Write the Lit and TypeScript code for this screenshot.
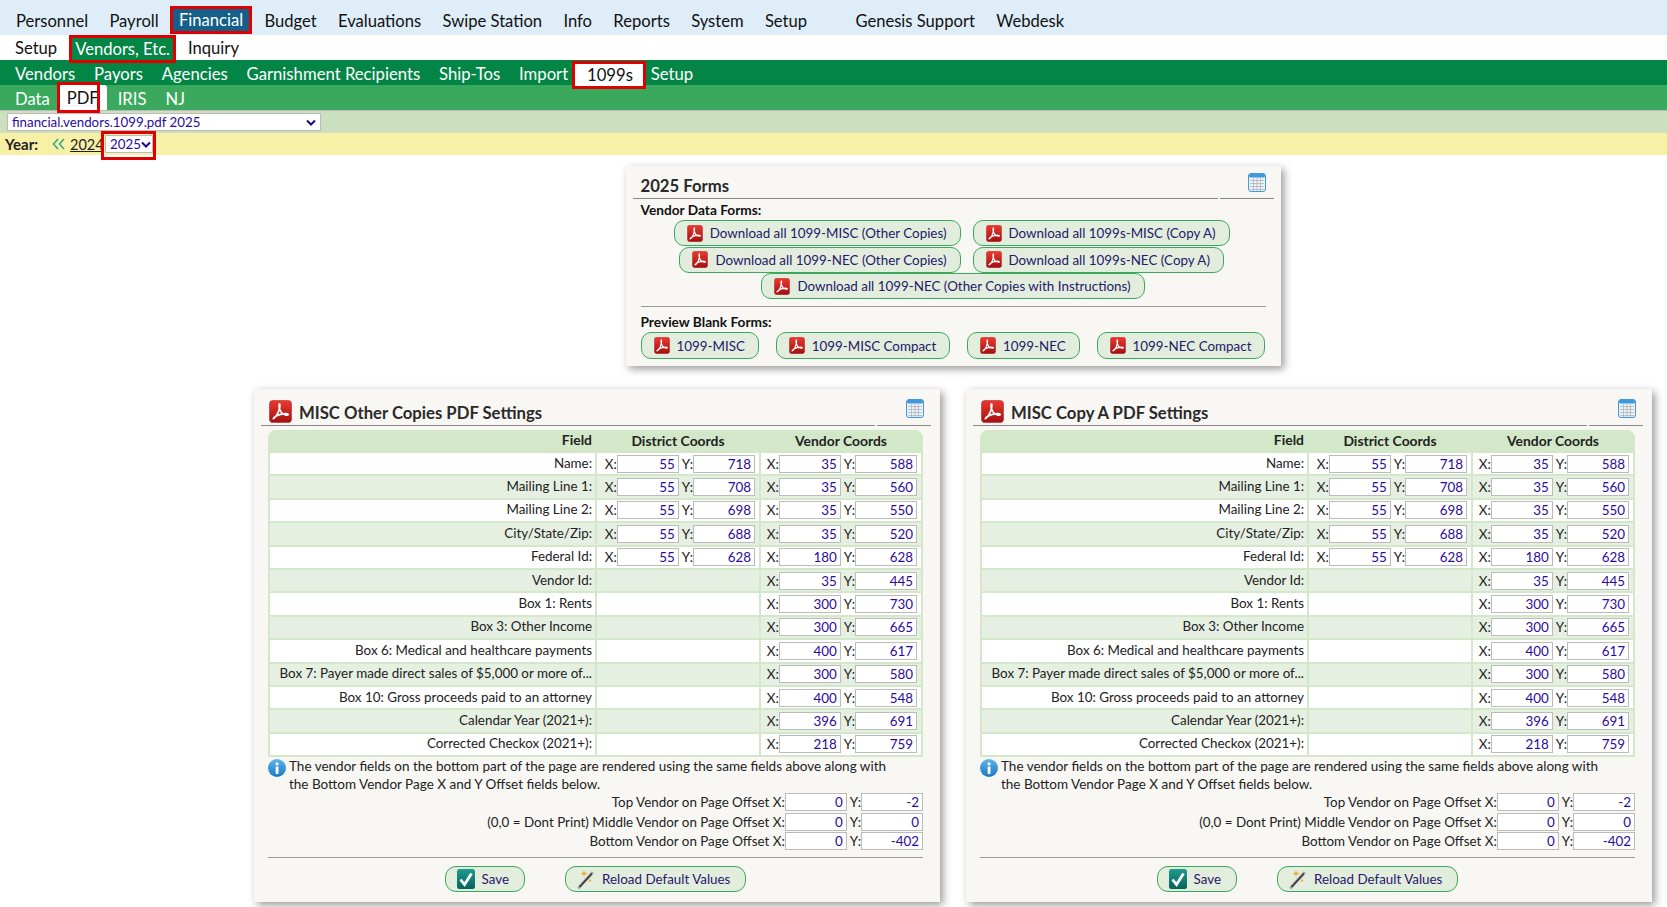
import { LitElement, html, css } from "lit";
import { customElement } from "lit/decorators.js";

const pdf = (w: number, h: number) => html`<svg class="ic" width=${w} height=${h} viewBox="0 0 24 24" preserveAspectRatio="none"><defs><linearGradient id="pg" x1="0" y1="0" x2="0" y2="1"><stop offset="0" stop-color="#ea3a30"/><stop offset="1" stop-color="#a30f10"/></linearGradient></defs><rect x="0.5" y="0.5" width="23" height="23" rx="3.500" fill="url(#pg)" stroke="#b32a2a" stroke-width=".6"/><path d="M4.500 19.500C7 18.500 10 13 11 8.500 11.500 6 11.400 4 11 4 10.400 4 10.200 6.500 11 9 12 12.500 14.500 15 17 15.500 19 15.900 20.500 15.500 20 15 19.300 14 15 14.300 12 15 9 15.800 5.800 17 4.500 19.500Z" fill="none" stroke="#fff" stroke-width="1.800" stroke-linejoin="round"/></svg>`;
const cal = html`<svg class="ic" width="18" height="19" viewBox="0 0 18 19"><rect x=".5" y=".5" width="17" height="18" rx="2.500" fill="#eef3f7" stroke="#3f97dc"/><rect x="1" y="1" width="16" height="3.500" rx="1.500" fill="#3f97dc"/><path d="M2 7.500h14M2 10.500h14M2 13.500h14M2 16.500h14M5.500 5v13M9 5v13M12.500 5v13" stroke="#a9b4bc" stroke-width=".8"/></svg>`;
const chev = html`<svg class="ic" width="10" height="7" viewBox="0 0 10 7"><path d="M1 1.500l4 4 4-4" fill="none" stroke="#1b0a80" stroke-width="2"/></svg>`;
const dbl = html`<svg class="ic" width="13" height="12" viewBox="0 0 13 12"><path d="M6 1L1.500 6 6 11M12 1L7.500 6 12 11" fill="none" stroke="#2ba98c" stroke-width="1.500"/></svg>`;
const info = html`<svg class="ic" width="18" height="18" viewBox="0 0 18 18"><defs><linearGradient id="ig" x1="0" y1="0" x2="0" y2="1"><stop offset="0" stop-color="#5db4ea"/><stop offset="1" stop-color="#1c78c4"/></linearGradient></defs><circle cx="9" cy="9" r="9" fill="url(#ig)"/><rect x="7.700" y="7.500" width="2.800" height="7.500" fill="#fff"/><circle cx="9" cy="4.800" r="1.600" fill="#fff"/></svg>`;
const check = html`<svg class="ic" width="18" height="20" viewBox="0 0 18 20"><defs><linearGradient id="cg" x1="0" y1="0" x2="0" y2="1"><stop offset="0" stop-color="#1f9c90"/><stop offset="1" stop-color="#07635a"/></linearGradient></defs><rect width="18" height="20" rx="2.500" fill="url(#cg)"/><path d="M3.500 10.500l4 5 7-11" fill="none" stroke="#fff" stroke-width="2.800"/></svg>`;
const wand = html`<svg class="ic" width="18" height="20" viewBox="0 0 18 20"><path d="M2 18.500L15 4" stroke="#aaa" stroke-width="3" stroke-linecap="round"/><path d="M2.500 18L15 4.500" stroke="#333" stroke-width="1.600"/><path d="M7 1l1 2.500L10.500 4.500 8 5.500 7 8 6 5.500 3.500 4.500 6 3.500zM13 9.500l.6 1.400 1.400.6-1.400.6-.6 1.400-.6-1.400-1.400-.6 1.400-.6z" fill="#f2a93b"/></svg>`;

const rows: [string, number[] | null, number[]][] = [
  ["Name:", [55, 718], [35, 588]],
  ["Mailing Line 1:", [55, 708], [35, 560]],
  ["Mailing Line 2:", [55, 698], [35, 550]],
  ["City/State/Zip:", [55, 688], [35, 520]],
  ["Federal Id:", [55, 628], [180, 628]],
  ["Vendor Id:", null, [35, 445]],
  ["Box 1: Rents", null, [300, 730]],
  ["Box 3: Other Income", null, [300, 665]],
  ["Box 6: Medical and healthcare payments", null, [400, 617]],
  ["Box 7: Payer made direct sales of $5,000 or more of...", null, [300, 580]],
  ["Box 10: Gross proceeds paid to an attorney", null, [400, 548]],
  ["Calendar Year (2021+):", null, [396, 691]],
  ["Corrected Checkox (2021+):", null, [218, 759]],
];
const offs: [string, number, number][] = [
  ["Top Vendor on Page Offset X:", 0, -2],
  ["(0,0 = Dont Print) Middle Vendor on Page Offset X:", 0, 0],
  ["Bottom Vendor on Page Offset X:", 0, -402],
];

@customElement("app-root")
export class AppRoot extends LitElement {
  static styles = css`
    :host { display: block; font-family: "Lato", sans-serif; font-size: 13.400px; color: #222; height: 907px; overflow: hidden; }
    svg.ic { flex: none; display: block; }
    .nav { display: flex; align-items: center; box-sizing: border-box; font-size: 16.600px; }
    .nav a { display: block; white-space: nowrap; }
    .n1 { height: 35px; background: #deedf7; padding: 6px 0 0 16px; gap: 21.300px; color: #111; }
    .n2 { height: 25px; background: #fff; padding: 1px 0 0 15px; color: #111; }
    .n3 { height: 25px; background: #038546; padding: 2px 0 0 15px; gap: 18.800px; color: #fff; font-size: 16.700px; }
    .n4 { height: 25px; background: #3aa95e; padding: 2px 0 0 15px; color: #fff; }
    .mark { position: relative; }
    .mark::after { content: ""; position: absolute; border: 3px solid #e00000; z-index: 2; pointer-events: none; }
    .n1 .far { margin-left: 27px; }
    .fin { background: #156088; color: #fff; padding: 2px 6px; margin: -1px -6px 0 -7px; line-height: 18px; }
    .fin::after { inset: -3px; }
    .n2 .ven { align-self: flex-start; background: #038546; color: #fff; margin: 2px 15px 0 15px; padding: 0 3px; height: 22px; line-height: 22px; }
    .ven::after { inset: -3px; }
    .n3 .k99 { align-self: flex-start; background: #fff; color: #111; padding: 0 10px 0 12px; margin: 2px -11px 0 -12px; height: 22px; line-height: 22px; }
    .k99::after { inset: -3px; }
    .n4 .pd { align-self: flex-start; background: #fff; color: #111; height: 25px; margin: -2px 11px 0 9px; padding: 0 8px; border-radius: 3px 3px 0 0; line-height: 26px; }
    .pd::after { left: -2px; top: -3px; bottom: -3px; width: 37px; }
    .n4 .s { margin-right: 19px; }
    .n5 { height: 23px; background: #cce0bf; border-top: 1px solid #b9b9b9; box-sizing: border-box; display: flex; align-items: center; padding-left: 7px; }
    .sel { box-sizing: border-box; background: #fff; border: 1px solid #bbb; height: 18px; color: #2a0a9e; font-size: 13.300px; display: flex; align-items: center; justify-content: space-between; padding: 0 4px; flex: none; }
    .sel1 { width: 314px; }
    .sel2 { width: 48px; margin-left: 4px; padding-right: 1px; }
    .sel2::after { inset: -5px -4px -8px -5px; }
    .n6 { height: 22px; background: #f9f0a8; display: flex; align-items: center; padding-left: 5px; font-size: 14.500px; }
    .yr { font-weight: 700; font-size: 15px; width: 47px; }
    .prev { text-decoration: underline; margin-left: 5px; width: 31px; }
    .panels { padding: 0 15px 0 254px; display: flex; flex-direction: column; align-items: center; }
    .top { padding-top: 11px; }
    .p { background: #f8f7f3; box-shadow: 3px 3px 8px rgba(0,0,0,.4); box-sizing: border-box; }
    .forms { width: 655px; height: 200px; padding: 0 7px; }
    .row { display: flex; gap: 26px; margin-top: 23px; }
    .set { width: 686px; height: 513px; padding: 0 9px 0 7px; }
    .head { display: flex; align-items: flex-end; justify-content: space-between; padding-right: 8px; box-sizing: border-box; }
    .forms .head { height: 32px; padding-bottom: 6px; }
    .set .head { height: 36px; padding-bottom: 7px; padding-right: 7px; }
    .hd { display: flex; align-items: center; gap: 7px; font-size: 16.700px; font-weight: 700; color: #2a2a2a; padding-left: 8px; }
    .forms .hd { margin-bottom: -4px; }
    .set .hd { margin-bottom: -5px; }
    .set .hd span { padding-top: 2px; }
    .rule { display: flex; gap: 2px; height: 1px; }
    .rule i { background: #888; flex: 1; }
    .rule i:last-child { flex: none; width: 54px; }
    .body { margin: 0 8px; }
    .btn { box-sizing: border-box; display: inline-flex; align-items: center; gap: 7px; height: 26px; padding: 0 13px 0 12px; border: 1px solid #3aa95e; border-radius: 10px; background: #e2eddd; color: #26186a; white-space: nowrap; }
    .lab { font-weight: 700; font-size: 13.700px; color: #111; line-height: 21px; }
    .dl { display: grid; grid-template-columns: 320px 1fr; column-gap: 12px; row-gap: .5px; }
    .dl .btn:nth-child(odd) { justify-self: end; }
    .dl .btn:nth-child(even) { justify-self: start; }
    .dl .btn:last-child { grid-column: 1 / 3; justify-self: center; }
    .hr { height: 1px; background: #999; }
    .forms .hr { margin: 7px 0 4px; }
    .pv { display: flex; justify-content: space-between; }
    .pv .btn { height: 27px; }
    .tb { margin: 4px 8px 0 7px; background: #d3e7c9; padding: 0 2px 2px; border-radius: 8px 8px 0 0; display: grid; grid-template-columns: 325px 162px 160px; gap: 2px; grid-template-rows: 21px repeat(13, 21.400px); }
    .th { font-weight: 700; font-size: 13.900px; display: flex; align-items: center; justify-content: center; }
    .th.f { justify-content: flex-end; }
    .c { display: flex; align-items: center; justify-content: flex-end; padding-right: 4px; box-sizing: border-box; }
    .f { padding-right: 3px; padding-bottom: 2px; white-space: nowrap; }
    .w { background: #fff; }
    .g { background: #e6f0e2; }
    .in { box-sizing: border-box; background: #fff; border: 1px solid #bbb; width: 62px; height: 18px; line-height: 16px; text-align: right; padding-right: 3px; color: #2a0a9e; flex: none; }
    .xy { margin-left: 3px; }
    .note { margin: 2px 8px 0 7px; display: flex; gap: 3px; line-height: 18px; height: 34px; font-size: 13.500px; }
    .note > div { margin-top: -2.500px; }
    .off { margin: 0 8px 0 7px; display: flex; flex-direction: column; gap: 1.500px; }
    .off div { display: flex; justify-content: flex-end; align-items: center; height: 18px; }
    .off .in { width: 62px; }
    .set .hr { margin: 7px 8px 8px 7px; }
    .act { display: flex; justify-content: center; gap: 40px; margin: 0 8px 0 7px; }
    .act .btn { padding: 0 15px 0 11px; border-radius: 11px; }
  `;
  cc(v: number[] | null, cls: string) {
    if (!v) return html`<div class="c ${cls}"></div>`;
    return html`<div class="c ${cls}"><span>X:</span><div class="in">${v[0]}</div><span class="xy">Y:</span><div class="in">${v[1]}</div></div>`;
  }
  panel(title: string) {
    return html`<div class="p set">
      <div class="head"><div class="hd">${pdf(23, 23)}<span>${title}</span></div>${cal}</div>
      <div class="rule"><i></i><i></i></div>
      <div class="tb">
        <div class="th f">Field</div><div class="th">District Coords</div><div class="th">Vendor Coords</div>
        ${rows.map((r, i) => { const k = i % 2 ? "g" : "w"; return html`<div class="c f ${k}">${r[0]}</div>${this.cc(r[1], k)}${this.cc(r[2], k)}`; })}
      </div>
      <div class="note">${info}<div>The vendor fields on the bottom part of the page are rendered using the same fields above along with<br/>the Bottom Vendor Page X and Y Offset fields below.</div></div>
      <div class="off">${offs.map(o => html`<div><span>${o[0]}</span><div class="in">${o[1]}</div><span class="xy">Y:</span><div class="in">${o[2]}</div></div>`)}</div>
      <div class="hr"></div>
      <div class="act"><a class="btn">${check}Save</a><a class="btn">${wand}Reload Default Values</a></div>
    </div>`;
  }
  b(t: string) { return html`<a class="btn">${pdf(16, 17)}${t}</a>`; }
  render() {
    return html`
      <div class="nav n1"><a>Personnel</a><a>Payroll</a><a class="mark fin">Financial</a><a>Budget</a><a>Evaluations</a><a>Swipe Station</a><a>Info</a><a>Reports</a><a>System</a><a>Setup</a><a class="far">Genesis Support</a><a>Webdesk</a></div>
      <div class="nav n2"><a>Setup</a><a class="mark ven">Vendors, Etc.</a><a>Inquiry</a></div>
      <div class="nav n3"><a>Vendors</a><a>Payors</a><a>Agencies</a><a>Garnishment Recipients</a><a>Ship-Tos</a><a>Import</a><a class="mark k99">1099s</a><a>Setup</a></div>
      <div class="nav n4"><a>Data</a><a class="mark pd">PDF</a><a class="s">IRIS</a><a>NJ</a></div>
      <div class="n5"><div class="sel sel1">financial.vendors.1099.pdf 2025${chev}</div></div>
      <div class="n6"><span class="yr">Year:</span>${dbl}<span class="prev">2024</span><div class="sel sel2 mark">2025${chev}</div></div>
      <div class="panels top"><div class="p forms">
        <div class="head"><div class="hd">2025 Forms</div>${cal}</div>
        <div class="rule"><i></i><i></i></div>
        <div class="body">
          <div class="lab">Vendor Data Forms:</div>
          <div class="dl">${this.b("Download all 1099-MISC (Other Copies)")}${this.b("Download all 1099s-MISC (Copy A)")}${this.b("Download all 1099-NEC (Other Copies)")}${this.b("Download all 1099s-NEC (Copy A)")}${this.b("Download all 1099-NEC (Other Copies with Instructions)")}</div>
          <div class="hr"></div>
          <div class="lab">Preview Blank Forms:</div>
          <div class="pv">${this.b("1099-MISC")}${this.b("1099-MISC Compact")}${this.b("1099-NEC")}${this.b("1099-NEC Compact")}</div>
        </div>
      </div></div>
      <div class="panels"><div class="row">${this.panel("MISC Other Copies PDF Settings")}${this.panel("MISC Copy A PDF Settings")}</div></div>
    `;
  }
}
